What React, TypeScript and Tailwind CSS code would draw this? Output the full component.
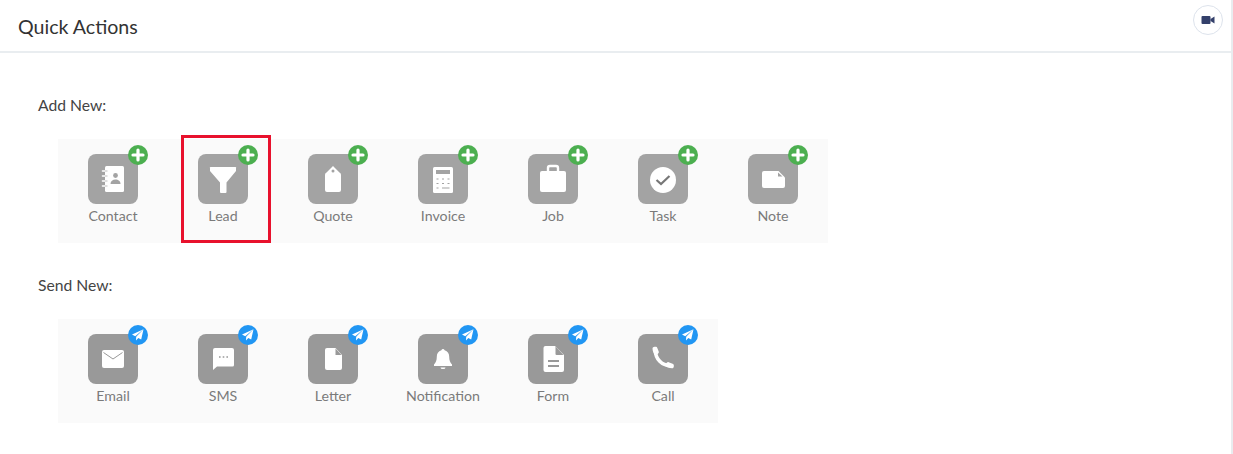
import { ReactNode } from 'react';

// all tile icons share a 50x50 box, cut-outs use the tile grey through currentColor
const Tile = ({ children }: { children: ReactNode }) => (
  <svg viewBox="0 0 50 50" className="w-[50px] h-[50px] block">{children}</svg>
);

const addItems: { label: string; icon: ReactNode }[] = [
  {
    label: 'Contact',
    icon: (
      <Tile>
        <rect x="17" y="12" width="19" height="26" rx="1.5" fill="#fff" />
        <path d="M14.5 17h5M14.5 22h5M14.5 27h5M14.5 32h5" stroke="#fff" strokeWidth="1.6" strokeLinecap="round" />
        <path d="M17 17h2.5M17 22h2.5M17 27h2.5M17 32h2.5" stroke="currentColor" strokeWidth="0.7" />
        <circle cx="27.5" cy="21.5" r="2.4" fill="currentColor" />
        <path d="M22.5 30c0-3 2.2-4.6 5-4.6s5 1.6 5 4.6z" fill="currentColor" />
      </Tile>
    ),
  },
  {
    label: 'Lead',
    icon: (
      <Tile>
        <path d="M12.5 13h25a.7.7 0 0 1 .5 1.2V17L28.5 28.5V38a1 1 0 0 1-1 1h-4.5a1 1 0 0 1-1-1V28.5L12 17v-2.8a.7.7 0 0 1 .5-1.2z" fill="#fff" />
      </Tile>
    ),
  },
  {
    label: 'Quote',
    icon: (
      <Tile>
        <path d="M25 12l6.5 6.5a2.5 2.5 0 0 1 1.5 2.5v15a2 2 0 0 1-2 2H19a2 2 0 0 1-2-2V21a2.5 2.5 0 0 1 1.5-2.5z" fill="#fff" />
        <circle cx="25" cy="17" r="1.5" fill="currentColor" />
      </Tile>
    ),
  },
  {
    label: 'Invoice',
    icon: (
      <Tile>
        <rect x="15" y="13" width="20" height="26" rx="1.5" fill="#fff" />
        <rect x="18" y="16" width="14" height="4" fill="currentColor" />
        <path d="M18.5 25h2M24 25h2M29.5 25h2M18.5 29.5h2M24 29.5h2M29.5 29.5h2M18.5 34h2M24 34h7.5" stroke="currentColor" strokeWidth="1.2" />
      </Tile>
    ),
  },
  {
    label: 'Job',
    icon: (
      <Tile>
        <path d="M20 18v-4a2 2 0 0 1 2-2h6a2 2 0 0 1 2 2v4" fill="none" stroke="#fff" strokeWidth="2.4" />
        <rect x="12" y="17" width="26" height="21" rx="2" fill="#fff" />
      </Tile>
    ),
  },
  {
    label: 'Task',
    icon: (
      <Tile>
        <circle cx="25" cy="26" r="13" fill="#fff" />
        <path d="M18.5 26l4.5 4 8.5-8" fill="none" stroke="#777" strokeWidth="2.2" />
      </Tile>
    ),
  },
  {
    label: 'Note',
    icon: (
      <Tile>
        <path d="M16 17h14.5l6.5 6.5V32a2 2 0 0 1-2 2H16a2 2 0 0 1-2-2V19a2 2 0 0 1 2-2z" fill="#fff" />
        <path d="M30 18.5v4h4.5z" fill="currentColor" />
      </Tile>
    ),
  },
];

const sendItems: { label: string; icon: ReactNode }[] = [
  {
    label: 'Email',
    icon: (
      <Tile>
        <rect x="14" y="16" width="22" height="18" rx="2" fill="#fff" />
        <path d="M15.5 18.5L25 25l9.5-6.5" fill="none" stroke="currentColor" strokeWidth="1" />
      </Tile>
    ),
  },
  {
    label: 'SMS',
    icon: (
      <Tile>
        <path d="M17 14h17a2 2 0 0 1 2 2v15a1.5 1.5 0 0 1-1.5 1.5H19L15 36V16a2 2 0 0 1 2-2z" fill="#fff" />
        <path d="M21 23h1.6M24.7 23h1.6M28.4 23h1.6" stroke="currentColor" strokeWidth="1.5" />
      </Tile>
    ),
  },
  {
    label: 'Letter',
    icon: (
      <Tile>
        <path d="M19 14h8.5l6.5 7v13a2 2 0 0 1-2 2H19a2 2 0 0 1-2-2V16a2 2 0 0 1 2-2z" fill="#fff" />
        <path d="M27.5 14.5v6.5h6z" fill="currentColor" />
      </Tile>
    ),
  },
  {
    label: 'Notification',
    icon: (
      <Tile>
        <path d="M25 15a2 2 0 0 1 1.6 1.2c3.2.8 4.6 3.4 4.6 6.6 0 4 1 5.6 2.8 7.7V32H16v-1.5c1.8-2.1 2.8-3.7 2.8-7.7 0-3.2 1.4-5.8 4.6-6.6A2 2 0 0 1 25 15z" fill="#fff" />
        <path d="M22.5 33.5h5a2.5 1.6 0 0 1-5 0z" fill="#fff" />
      </Tile>
    ),
  },
  {
    label: 'Form',
    icon: (
      <Tile>
        <path d="M17.5 12h9.5l9 9v15a2 2 0 0 1-2 2H17.5a2 2 0 0 1-2-2V14a2 2 0 0 1 2-2z" fill="#fff" />
        <path d="M27.5 12.5V20a1 1 0 0 0 1 1h7z" fill="currentColor" />
        <path d="M20 27h11M20 32h11" stroke="currentColor" strokeWidth="2" />
      </Tile>
    ),
  },
  {
    label: 'Call',
    icon: (
      <Tile>
        <path d="M17.5 17c0 8 6.5 14.5 14.5 14.5" fill="none" stroke="#fff" strokeWidth="3.6" />
        <path d="M14.5 14.5c0-1 1-1.7 2-1.7h1.5c.6 0 1 .4 1.2 1l1.6 3.9c.2.6 0 1.2-.4 1.6l-2.9 2.6c-1.6-1.5-3-5-3-7.4z" fill="#fff" />
        <path d="M35.8 32.5c0 1-.8 1.8-1.8 1.8-2.6 0-6-1.2-7.6-2.8l2.6-2.9c.4-.4 1-.6 1.6-.4l4 1.5c.6.2 1.1.6 1.2 1.2z" fill="#fff" />
      </Tile>
    ),
  },
];

const PlusBadge = () => (
  <span className="absolute -top-[9px] -right-[10px] w-5 h-5 rounded-full bg-[#4caf50] flex items-center justify-center">
    <svg viewBox="0 0 20 20" className="w-5 h-5">
      <path d="M10 5v10M5 10h10" stroke="#fff" strokeWidth="3.2" strokeLinecap="round" />
    </svg>
  </span>
);

const SendBadge = () => (
  <span className="absolute -top-[9px] -right-[10px] w-5 h-5 rounded-full bg-[#2196f3] flex items-center justify-center">
    <svg viewBox="0 0 20 20" className="w-5 h-5">
      <path d="M15.5 4.2L4 9.6l3.2 1.6z" fill="#fff" />
      <path d="M15.5 4.2L8.2 11.8l-.2 3.6 2.3-2.4 2.9 1.4z" fill="#fff" />
    </svg>
  </span>
);

function ActionGrid({ items, badge, tone }: { items: { label: string; icon: ReactNode }[]; badge: ReactNode; tone: string }) {
  return (
    <div className="ml-[20px] w-fit h-[104px] flex bg-[#fafafa]">
      {items.map((item) => (
        <div key={item.label} className="relative w-[110px] pt-[15px] flex flex-col items-center">
          <div className={`relative w-[50px] h-[50px] rounded-lg ${tone}`}>
            {item.icon}
            {badge}
          </div>
          <span className="mt-[3px] text-[14.2px] leading-[18px] text-[#7a7a7a]">{item.label}</span>
          {item.label === 'Lead' && (
            <div className="absolute left-[13px] -top-[4px] w-[90px] h-[108px] border-[3px] border-[#e8112d]" />
          )}
        </div>
      ))}
    </div>
  );
}

export default function App() {
  return (
    <div className="w-[1233px] h-[454px] bg-white border-r-2 border-[#e9ecef] overflow-hidden font-['Lato',sans-serif]">
      <div className="h-[53px] flex justify-between border-b-2 border-[#e9edf0] pl-[18px] pr-[8px]">
        <h1 className="mt-[15px] text-[19.6px] leading-6 font-normal text-[#333]">Quick Actions</h1>
        <button className="mt-[5px] w-[30px] h-[30px] rounded-full border border-[#dde3ec] flex items-center justify-center">
          <svg viewBox="0 0 14 10" className="w-[14px] h-[10px] text-[#34406b]" fill="currentColor">
            <rect x="0.5" y="1" width="9" height="8" rx="1" />
            <path d="M9.5 4l4-2.5v7l-4-2.5z" />
          </svg>
        </button>
      </div>
      <div className="pl-[38px] pt-[42px]">
        <p className="text-[15.7px] leading-5 text-[#444]">Add New:</p>
        <div className="mt-[24px]">
          <ActionGrid items={addItems} badge={<PlusBadge />} tone="bg-[#a3a3a3] text-[#a3a3a3]" />
        </div>
        <p className="mt-[32px] text-[15.7px] leading-5 text-[#444]">Send New:</p>
        <div className="mt-[24px]">
          <ActionGrid items={sendItems} badge={<SendBadge />} tone="bg-[#999999] text-[#999999]" />
        </div>
      </div>
    </div>
  );
}
